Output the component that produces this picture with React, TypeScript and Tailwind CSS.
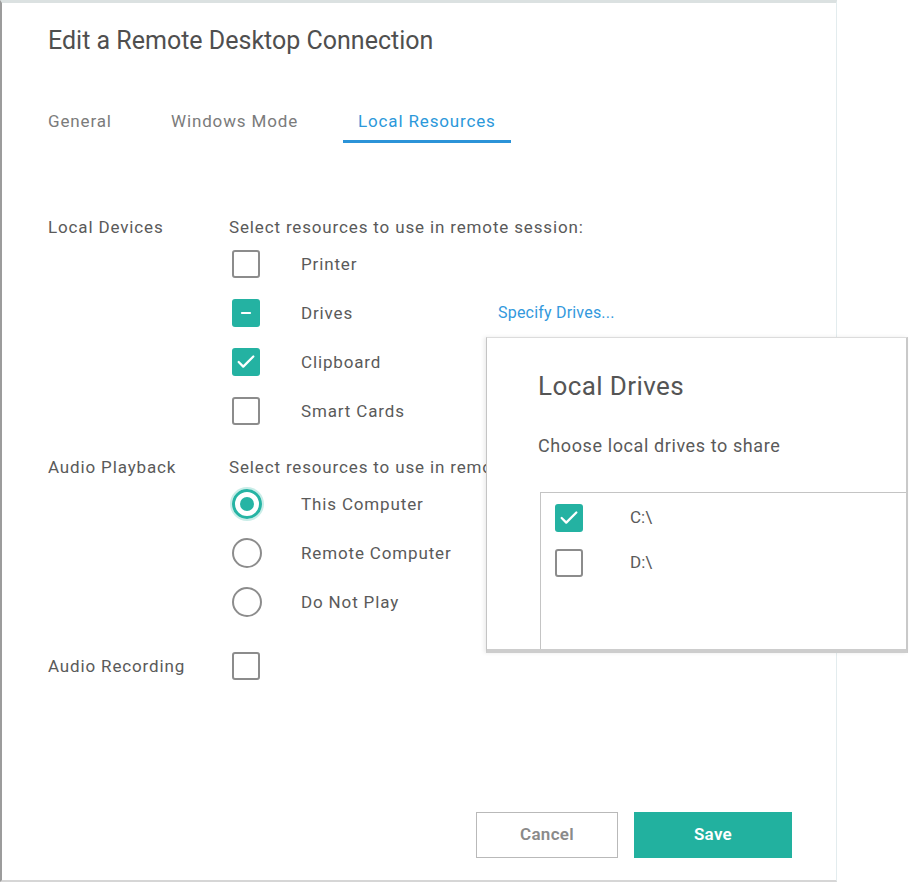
import { Check, Minus } from "lucide-react";

const font = { fontFamily: "Roboto, 'Noto Sans', sans-serif" };

const Box = ({ state = "off" }: { state?: "off" | "on" | "mixed" }) => {
  if (state === "off") {
    return <div className="w-[28px] h-[28px] shrink-0 rounded-[3px] border-2 border-[#8c8c8c] bg-white" />;
  }
  return (
    <div className="w-[28px] h-[28px] shrink-0 rounded-[3px] bg-[#24b2a2] flex items-center justify-center">
      {state === "on" ? (
        <Check className="w-[22px] h-[22px] text-white" strokeWidth={2.5} />
      ) : (
        <Minus className="w-[14px] h-[14px] text-white" strokeWidth={3.5} />
      )}
    </div>
  );
};

const Radio = ({ checked = false }: { checked?: boolean }) =>
  checked ? (
    <div className="w-[30px] h-[30px] shrink-0 rounded-full border-[3px] border-[#26b4a4] shadow-[0_0_0_2px_#c9ede8] flex items-center justify-center">
      <div className="w-[14px] h-[14px] rounded-full bg-[#26b4a4]" />
    </div>
  ) : (
    <div className="w-[30px] h-[30px] shrink-0 rounded-full border-2 border-[#8c8c8c]" />
  );

const devices: { label: string; state: "off" | "on" | "mixed" }[] = [
  { label: "Printer", state: "off" },
  { label: "Drives", state: "mixed" },
  { label: "Clipboard", state: "on" },
  { label: "Smart Cards", state: "off" },
];

const playback = [
  { label: "This Computer", checked: true },
  { label: "Remote Computer", checked: false },
  { label: "Do Not Play", checked: false },
];

export default function App() {
  return (
    <div className="w-[912px] h-[883px] bg-white relative overflow-hidden text-[#5a5a5a]" style={font}>
      <div className="w-[837px] h-[882px] flex flex-col border-l-2 border-l-[#9c9c9c] border-t-[3px] border-t-[#dbe1e1] border-r border-r-[#e3ecee] border-b-2 border-b-[#d6d6d6]">
        <div className="pl-[46px] text-[17px] leading-[24px] tracking-[0.85px]">
          <h1 className="mt-[23px] text-[25px] leading-[30px] tracking-normal text-[#4f4f4f]">
            Edit a Remote Desktop Connection
          </h1>

          <div className="mt-[53px] flex items-end">
            <div className="w-[123px] pb-[10px] text-[#7b7b7b]">General</div>
            <div className="w-[172px] pb-[10px] text-[#7b7b7b]">Windows Mode</div>
            <div className="px-[15px] pb-[7px] border-b-[3px] border-[#2b93d8] text-[#2c98da]">
              Local Resources
            </div>
          </div>

          <div className="mt-[72px] flex">
            <div className="w-[181px]">Local Devices</div>
            <div className="flex flex-col">
              <div>Select resources to use in remote session:</div>
              {devices.map((d) => (
                <div key={d.label} className="h-[49px] flex items-center">
                  <div className="ml-[3px]">
                    <Box state={d.state} />
                  </div>
                  <div className="ml-[41px] w-[197px]">{d.label}</div>
                  {d.label === "Drives" && (
                    <span className="text-[16px] tracking-[0.2px] text-[#3399dd]">Specify Drives...</span>
                  )}
                </div>
              ))}
            </div>
          </div>

          <div className="mt-[20px] flex">
            <div className="w-[181px]">Audio Playback</div>
            <div className="flex flex-col">
              <div>Select resources to use in remote session:</div>
              {playback.map((p) => (
                <div key={p.label} className="h-[49px] flex items-center">
                  <div className="ml-[3px]">
                    <Radio checked={p.checked} />
                  </div>
                  <div className="ml-[39px]">{p.label}</div>
                </div>
              ))}
            </div>
          </div>

          <div className="mt-[15px] h-[49px] flex items-center">
            <div className="w-[181px]">Audio Recording</div>
            <div className="ml-[3px]">
              <Box />
            </div>
          </div>
        </div>

        <div className="mt-auto mb-[22px] mr-[44px] flex justify-end gap-[16px] text-[17px] tracking-[0.3px]">
          <button className="w-[142px] h-[46px] border border-[#b9b9b9] bg-white text-[#8a8a8a] font-semibold">
            Cancel
          </button>
          <button className="w-[158px] h-[46px] bg-[#22b19f] text-white font-semibold">Save</button>
        </div>
      </div>

      <div className="absolute left-[486px] top-[337px] w-[422px] h-[316px] bg-white flex flex-col border-l border-l-[#c4c4c4] border-t border-t-[#dcdcdc] border-r-2 border-r-[#c9c9c9] border-b-4 border-b-[#cdcdcd] shadow-[-2px_0_4px_rgba(0,0,0,0.08)]">
        <div className="pl-[51px] pt-[32px] text-[26px] leading-[32px] tracking-[0.4px] text-[#555]">Local Drives</div>
        <div className="pl-[51px] mt-[32px] text-[18px] leading-[24px] tracking-[0.6px] text-[#5a5a5a]">
          Choose local drives to share
        </div>
        <div className="ml-[53px] mt-[34px] flex-1 border-l border-t border-[#c4c4c4] pl-[12px] pt-[9px] text-[17px]">
          {[
            { label: "C:\\", state: "on" as const },
            { label: "D:\\", state: "off" as const },
          ].map((d) => (
            <div key={d.label} className="h-[45px] flex items-start">
              <div className="w-[31px] h-[31px] flex items-center justify-center">
                <Box state={d.state} />
              </div>
              <div className="ml-[46px] leading-[31px]">{d.label}</div>
            </div>
          ))}
        </div>
      </div>
    </div>
  );
}
